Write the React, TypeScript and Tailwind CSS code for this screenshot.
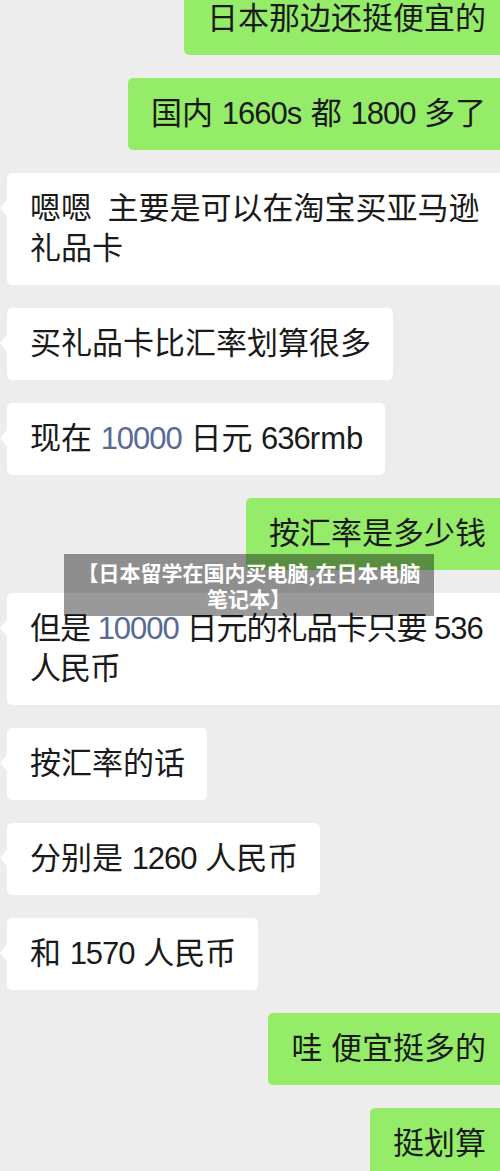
import React from "react";

type Part = string | { link: string };

interface Msg {
  side: "left" | "right";
  lines: Part[][];
  wide?: boolean;
  tight?: boolean;
}

const messages: Msg[] = [
  { side: "right", lines: [["日本那边还挺便宜的"]] },
  { side: "right", lines: [["国内 1660s 都 1800 多了"]] },
  { side: "left", lines: [["嗯嗯\u2002主要是可以在淘宝买亚马逊"], ["礼品卡"]], wide: true },
  { side: "left", lines: [["买礼品卡比汇率划算很多"]] },
  { side: "left", lines: [["现在 ", { link: "10000" }, " 日元 636rmb"]] },
  { side: "right", lines: [["按汇率是多少钱"]] },
  {
    side: "left",
    lines: [["但是 ", { link: "10000" }, " 日元的礼品卡只要 536"], ["人民币"]],
    wide: true,
    tight: true,
  },
  { side: "left", lines: [["按汇率的话"]] },
  { side: "left", lines: [["分别是 1260 人民币"]] },
  { side: "left", lines: [["和 1570 人民币"]] },
  { side: "right", lines: [["哇 便宜挺多的"]] },
  { side: "right", lines: [["挺划算"]] },
];

// digits in the screenshot run a little narrower than Liberation Sans
function Text({ value }: { value: string }) {
  return (
    <>
      {value.split(/(\d+)/).map((s, i) =>
        /^\d+$/.test(s) ? (
          <span key={i} className="tracking-[-1px]">
            {s}
          </span>
        ) : (
          <span key={i}>{s}</span>
        )
      )}
    </>
  );
}

function Line({ parts }: { parts: Part[] }) {
  return (
    <div className="whitespace-pre">
      {parts.map((p, i) =>
        typeof p === "string" ? (
          <Text key={i} value={p} />
        ) : (
          <span key={i} className="text-[#576b95]">
            <Text value={p.link} />
          </span>
        )
      )}
    </div>
  );
}

function Bubble({ msg }: { msg: Msg }) {
  if (msg.side === "right") {
    return (
      <div className="flex justify-end">
        <div className="-mr-[10px] rounded-[5px] bg-[#95ec69] py-[16px] pl-[23px] pr-[24px]">
          {msg.lines.map((l, i) => (
            <Line key={i} parts={l} />
          ))}
        </div>
      </div>
    );
  }

  let cls = "relative rounded-[5px] bg-white py-[16px] pl-[23px] pr-[22px]";
  if (msg.wide) cls += " -mr-[10px] flex-1";
  if (msg.tight) cls += " tracking-[-1px]";

  return (
    <div className="flex justify-start pl-[7px]">
      <div className={cls}>
        <div className="absolute left-[-7px] top-[27px] h-0 w-0 border-y-[8px] border-r-[7px] border-y-transparent border-r-white" />
        {msg.lines.map((l, i) => (
          <Line key={i} parts={l} />
        ))}
      </div>
    </div>
  );
}

export default function App() {
  return (
    <div
      className="relative h-[1171px] w-[500px] overflow-hidden bg-[#ededed] text-[31px] leading-[40px] text-[#1a1a1a]"
      style={{ fontFamily: '"Liberation Sans", "Noto Sans CJK SC", sans-serif' }}
    >
      <div className="-mt-[17px] flex flex-col gap-[23px]">
        {messages.map((m, i) => (
          <Bubble key={i} msg={m} />
        ))}
      </div>

      <div
        className="absolute left-[64px] top-[554px] w-[370px] bg-black/40 py-[5px] text-center text-[21px] font-bold leading-[26px] text-white"
        style={{ fontFamily: '"Noto Sans CJK SC", sans-serif' }}
      >
        【日本留学在国内买电脑,在日本电脑
        <br />
        笔记本】
      </div>
    </div>
  );
}
